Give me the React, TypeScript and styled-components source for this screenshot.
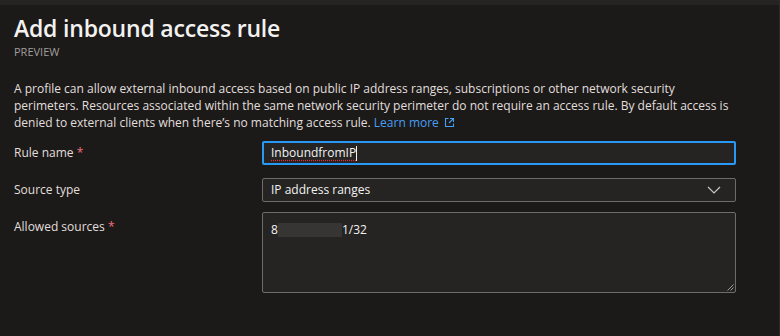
import React from 'react';
import styled, { createGlobalStyle } from 'styled-components';

const GlobalStyle = createGlobalStyle`
  html, body {
    margin: 0;
    padding: 0;
    background: #1b1a19;
  }
  body {
    font-family: "Open Sans", "Noto Sans", sans-serif;
    color: #e1dfdd;
  }
`;

const ExternalIcon = () => (
  <svg width="11" height="11" viewBox="0 0 11 11" fill="none" stroke="#479ef5" strokeWidth="1.1">
    <path d="M4.5 1.5H1.5v8h8V6.5" />
    <path d="M6 1.5h3.5V5" />
    <path d="M9.5 1.5L5 6" />
  </svg>
);

const Chevron = () => (
  <svg width="14" height="8" viewBox="0 0 14 8" fill="none" stroke="#c8c6c4" strokeWidth="1.2">
    <path d="M1 1l6 6 6-6" />
  </svg>
);

const Grip = () => (
  <svg width="8" height="8" viewBox="0 0 8 8" fill="none" stroke="#9a9896" strokeWidth="1">
    <path d="M7.5 1.5L1.5 7.5" />
    <path d="M7.5 4.5L4.5 7.5" />
  </svg>
);

export default function App() {
  return (
    <Div_Page>
      <GlobalStyle />
      <Div_TopBar />
      <Div_Content>
        <H1_Title>Add inbound access rule</H1_Title>
        <Div_Preview>PREVIEW</Div_Preview>
        <P_Description>
          <Span_Line>
            A profile can allow external inbound access based on public IP address ranges, subscriptions or other network security
          </Span_Line>
          <Span_Line>
            perimeters. Resources associated within the same network security perimeter do not require an access rule. By default access is
          </Span_Line>
          <Span_Line>
            denied to external clients when there’s no matching access rule.{' '}
            <A_Link href="#">
              Learn more <ExternalIcon />
            </A_Link>
          </Span_Line>
        </P_Description>

        <Div_Form>
          <Div_Row>
            <Label_Field $top={5}>
              Rule name <Span_Req>*</Span_Req>
            </Label_Field>
            <Div_Input $focused>
              <Span_Value>
                <Span_Spell>InboundfromIP</Span_Spell>
                <Span_Caret />
              </Span_Value>
            </Div_Input>
          </Div_Row>

          <Div_Row $gap={13}>
            <Label_Field $top={5}>Source type</Label_Field>
            <Div_Input>
              <Span_Value>IP address ranges</Span_Value>
              <Chevron />
            </Div_Input>
          </Div_Row>

          <Div_Row $gap={10}>
            <Label_Field $top={8}>
              Allowed sources <Span_Req>*</Span_Req>
            </Label_Field>
            <Div_TextArea>
              <Span_Value>
                8<Span_Redact />1/32
              </Span_Value>
              <Span_Grip>
                <Grip />
              </Span_Grip>
            </Div_TextArea>
          </Div_Row>
        </Div_Form>
      </Div_Content>
    </Div_Page>
  );
}

const Div_Page = styled.div`
  width: 780px;
  height: 336px;
  overflow: hidden;
  background: #1b1a19;
  border-right: 1px solid #2b2a29;
  box-sizing: border-box;
`;

const Div_TopBar = styled.div`
  height: 5px;
  background: #252423;
`;

const Div_Content = styled.div`
  padding: 8px 0 0 14px;
`;

const H1_Title = styled.h1`
  margin: 0;
  font-family: "Open Sans", sans-serif;
  font-weight: 600;
  font-size: 23px;
  line-height: 30px;
  color: #f3f2f1;
  letter-spacing: -0.2px;
`;

const Div_Preview = styled.div`
  margin-top: 2px;
  font-size: 11px;
  line-height: 14px;
  color: #a19f9d;
`;

const P_Description = styled.p`
  margin: 21px 0 0;
  font-size: 12px;
  line-height: 17px;
  color: #e1dfdd;
`;

const Span_Line = styled.span`
  display: block;
  white-space: nowrap;
`;

const A_Link = styled.a`
  color: #479ef5;
  text-decoration: none;

  svg {
    vertical-align: -1px;
    margin-left: 2px;
  }
`;

const Div_Form = styled.div`
  display: flex;
  flex-direction: column;
  margin-top: 10px;
`;

const Div_Row = styled.div<{ $gap?: number }>`
  display: grid;
  grid-template-columns: 248px 474px;
  align-items: start;
  margin-top: ${(p) => p.$gap ?? 0}px;
`;

const Label_Field = styled.label<{ $top: number }>`
  padding-top: ${(p) => p.$top}px;
  font-size: 12px;
  line-height: 14px;
  color: #e1dfdd;
`;

const Span_Req = styled.span`
  color: #f1707b;
`;

const Div_Input = styled.div<{ $focused?: boolean }>`
  height: 24px;
  box-sizing: border-box;
  display: flex;
  align-items: center;
  justify-content: space-between;
  padding: 0 14px 0 8px;
  background: #252423;
  border: ${(p) => (p.$focused ? '2px solid #2899f5' : '1px solid #6d6c6b')};
  padding-left: ${(p) => (p.$focused ? '7px' : '8px')};
  border-radius: 2px;
`;

const Span_Value = styled.span`
  font-size: 12px;
  line-height: 16px;
  color: #f3f2f1;
  display: flex;
  align-items: center;
  white-space: nowrap;
`;

const Span_Spell = styled.span`
  text-decoration: underline dotted #e0303d;
  text-underline-offset: 3px;
`;

const Span_Caret = styled.span`
  display: inline-block;
  width: 1px;
  height: 15px;
  background: #f3f2f1;
`;

const Div_TextArea = styled.div`
  position: relative;
  display: flex;
  align-items: flex-start;
  height: 81px;
  box-sizing: border-box;
  padding: 9px 8px;
  background: #252423;
  border: 1px solid #6d6c6b;
  border-radius: 2px;
`;

const Span_Redact = styled.span`
  display: inline-block;
  width: 64px;
  height: 14px;
  background: #363534;
`;

const Span_Grip = styled.span`
  position: absolute;
  right: 1px;
  bottom: 1px;
  display: flex;
`;
